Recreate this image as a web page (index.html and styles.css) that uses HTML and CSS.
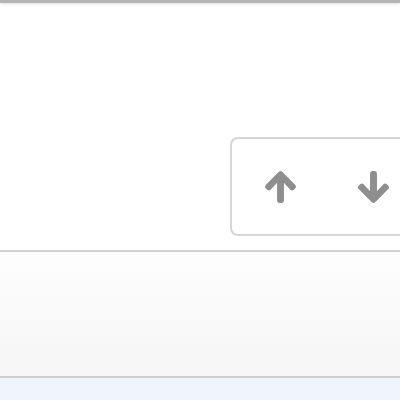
FILE: index.html
```html
<!DOCTYPE html>
<html>
<head>
<meta charset="utf-8">
<link rel="stylesheet" href="styles.css">
</head>
<body>
<div class="topbar"></div>
<main class="content">
  <div class="nav-box">
    <button class="nav-btn" aria-label="Previous">
      <svg viewBox="-20 -10 488 532" class="icon"><path d="M34.9 289.5l-22.2-22.2c-9.4-9.4-9.4-24.6 0-33.9L207 39c9.4-9.4 24.6-9.4 33.9 0l194.3 194.3c9.4 9.4 9.4 24.6 0 33.9L413 289.4c-9.5 9.5-25 9.3-34.3-.4L264 168.6V456c0 13.3-10.7 24-24 24h-32c-13.3 0-24-10.7-24-24V168.6L69.2 289.1c-9.3 9.8-24.8 10-34.3.4z"/></svg>
    </button>
    <button class="nav-btn" aria-label="Next">
      <svg viewBox="-20 -10 488 532" class="icon"><path d="M413.1 222.5l22.2 22.2c9.4 9.4 9.4 24.6 0 33.9L241 473c-9.4 9.4-24.6 9.4-33.9 0L12.7 278.6c-9.4-9.4-9.4-24.6 0-33.9l22.2-22.2c9.5-9.5 25-9.3 34.3.4L184 343.4V56c0-13.3 10.7-24 24-24h32c13.3 0 24 10.7 24 24v287.4l114.8-120.5c9.3-9.8 24.8-10 34.3-.4z"/></svg>
    </button>
  </div>
</main>
<footer class="footer"></footer>
<div class="below"></div>
</body>
</html>
```

FILE: styles.css
```css
html, body {
  margin: 0;
  padding: 0;
  height: 100%;
  background: #eff4fd;
  font-family: "Liberation Sans", Arial, sans-serif;
}
body {
  display: flex;
  flex-direction: column;
  overflow: hidden;
}
.topbar {
  height: 3px;
  background: #b4b4b4;
  box-shadow: 0 1px 3px rgba(0,0,0,0.12);
  position: relative;
  z-index: 1;
}
.content {
  height: 247px;
  background: #ffffff;
  padding-top: 134px;
  padding-left: 230px;
  box-sizing: border-box;
  overflow: hidden;
}
.nav-box {
  width: 170px;
  height: 99px;
  box-sizing: border-box;
  border: 2px solid #d6d6d6;
  border-right: none;
  border-radius: 8px 0 0 8px;
  display: flex;
  align-items: center;
  padding-left: 31px;
  gap: 59px;
  background: #fff;
}
.nav-btn {
  border: none;
  background: none;
  padding: 0;
  width: 34px;
  height: 36px;
  display: flex;
  align-items: center;
  justify-content: center;
}
.icon {
  width: 33px;
  height: 36px;
  fill: #8e8e8e;
  stroke: #8e8e8e;
  stroke-width: 22;
  stroke-linejoin: round;
}
.footer {
  height: 128px;
  box-sizing: border-box;
  border-top: 2px solid #d2d2d2;
  border-bottom: 2px solid #cfcfcf;
  background: linear-gradient(#fdfdfd, #f6f6f6);
}
.below {
  flex: 1;
  background: #eff4fd;
}
```
